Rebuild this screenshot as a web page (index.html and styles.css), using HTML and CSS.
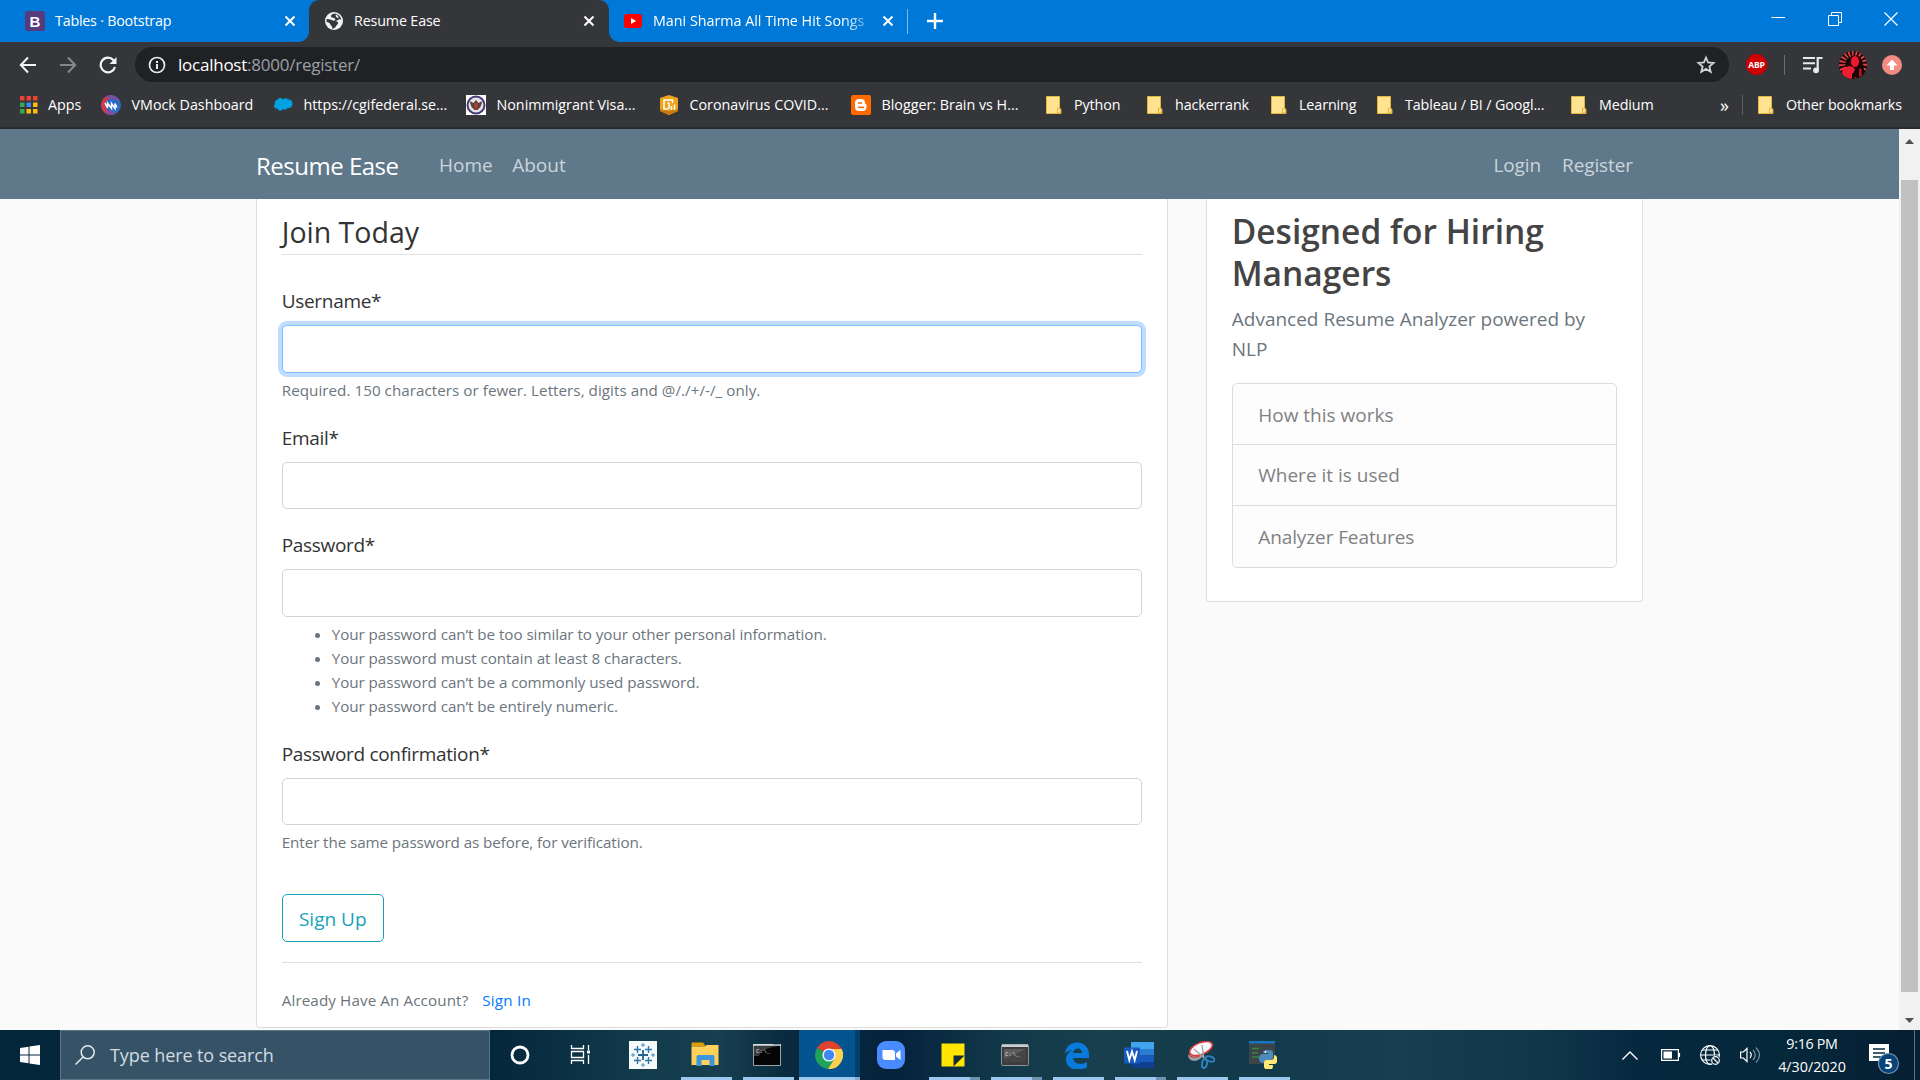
FILE: index.html
```html
<!DOCTYPE html>
<html lang="en">
<head>
<meta charset="utf-8">
<title>Resume Ease</title>
<link rel="stylesheet" href="styles.css">
</head>
<body>
<svg class="defs" aria-hidden="true">
  <symbol id="close" viewBox="0 0 12 12"><path d="M1.5 1.5l9 9M10.5 1.5l-9 9" stroke="#fff" stroke-width="2" fill="none"/></symbol>
  <symbol id="folder" viewBox="0 0 20 20"><path d="M1.500 1.500h13v12l1.500 1v4h-14.500z" fill="#ffe391" stroke="#e0b83e"/><path d="M12.500 18v-4.500h3V18z" fill="#ffe391" stroke="#d6ac33" stroke-width=".8"/></symbol>
</svg>
<header class="browser">
  <div class="tabs">
    <div class="tab tab-first">
      <svg class="fav" viewBox="0 0 20 20"><rect width="20" height="20" rx="3" fill="#553b7e"/><text x="10" y="15.500" text-anchor="middle" class="b-letter">B</text></svg>
      <span class="tab-title t-a">Tables · Bootstrap</span>
      <svg class="x"><use href="#close"/></svg>
    </div>
    <div class="tab tab-active">
      <svg class="fav globe" viewBox="0 0 18 18"><circle cx="9" cy="9" r="9" fill="#f1f3f4"/><path d="M9.500 1.500C7 2 5.500 3.200 6 5c1.300 1 3.800.5 4.300 2.300.2 1.200-1.300 1.700-2.600 1.300C6 8 3.500 6.800 1.800 7.200 1.500 8 1.300 9.300 1.600 10c1.900.3 3.200.8 3.800 2.400.3 1.100 1.500 1.500 1.800 2.600v1.700c1.500.2 3.600-1.300 4.200-3.200.3-1.100 1.700-1.300 1.700-2.600 0-1.600-2-1.800-3.300-2.200 1.600.4 2.600 0 3.600-1 1-.6 2-.5 3 0C15.800 4.500 13 2 9.500 1.500z" fill="#35363a"/><path d="M11.500 2.800c-.3 1.200.3 2.200 2 2.700" fill="none" stroke="#f1f3f4" stroke-width="1.600"/></svg>
      <span class="tab-title t-b">Resume Ease</span>
      <svg class="x"><use href="#close"/></svg>
    </div>
    <div class="tab tab-last">
      <svg class="fav yt" viewBox="0 0 18 14"><rect width="18" height="14" rx="3" fill="#f00"/><path d="M7 4l5.200 3L7 10z" fill="#fff"/></svg>
      <span class="tab-title t-c">Mani Sharma All Time Hit Songs</span>
      <svg class="x"><use href="#close"/></svg>
    </div>
    <svg class="plus" viewBox="0 0 16 16"><path d="M8 0v16M0 8h16" stroke="#fff" stroke-width="2.400"/></svg>
    <div class="win">
      <svg viewBox="0 0 14 14"><path d="M.5 5.500H14" stroke="#fff"/></svg>
      <svg viewBox="0 0 14 14"><path d="M.5 3.500h10v10H.5zM3.500 3V.5h10v10H11" stroke="#fff" fill="none"/></svg>
      <svg viewBox="0 0 14 14"><path d="M.5.5l13 13M13.500.5l-13 13" stroke="#fff" stroke-width="1.200"/></svg>
    </div>
  </div>
  <div class="toolbar">
    <svg class="nav-ic" viewBox="0 0 18 18"><path d="M17 9H2M9 1.500L1.800 9 9 16.500" fill="none" stroke="#f1f3f4" stroke-width="2"/></svg>
    <svg class="nav-ic fwd" viewBox="0 0 18 18"><path d="M1 9h15M9 1.500L16.200 9 9 16.500" fill="none" stroke="#85878a" stroke-width="2"/></svg>
    <svg class="nav-ic" viewBox="0 0 18 18"><path d="M14.500 4.200A7.300 7.300 0 1 0 16 11" fill="none" stroke="#f1f3f4" stroke-width="2.200"/><path d="M17.500 1v7h-7z" fill="#f1f3f4"/></svg>
    <div class="omnibox">
      <svg class="info" viewBox="0 0 18 18"><circle cx="9" cy="9" r="7.500" fill="none" stroke="#e8eaed" stroke-width="1.700"/><path d="M9 8v5M9 5v1.900" stroke="#e8eaed" stroke-width="2"/></svg>
      <span class="url"><b>localhost</b>:8000/register/</span>
      <svg class="star" viewBox="0 0 20 20"><path d="M10 2.500l2.100 5 5.400.5-4.100 3.500 1.300 5.300-4.700-2.900-4.700 2.900 1.300-5.300L2.500 8l5.400-.5z" fill="none" stroke="#d0d2d4" stroke-width="1.800"/></svg>
    </div>
    <svg class="abp" viewBox="0 0 22 22"><path d="M6.500 0h9L22 6.500v9L15.500 22h-9L0 15.500v-9z" fill="#a80818"/><path d="M6.500 1h9L21 6.500v9L15.500 21h-9L1 15.500v-9z" fill="#d00000"/><text x="11" y="14.500" text-anchor="middle" class="abp-t">ABP</text></svg>
    <i class="tsep"></i>
    <svg class="music" viewBox="0 0 20 18"><path d="M0 2h12M0 7.300h12M0 12.600h8" stroke="#e8eaed" stroke-width="2"/><path d="M14.700 14V2H19.500" fill="none" stroke="#e8eaed" stroke-width="2.200"/><circle cx="13" cy="14.300" r="2.900" fill="#e8eaed"/></svg>
    <svg class="avatar" viewBox="0 0 28 28"><clipPath id="av"><circle cx="14" cy="14" r="14"/></clipPath><g clip-path="url(#av)"><path fill="#1c0507" d="M0 0h28v28H0z"/><circle cx="14" cy="13" r="11" fill="none" stroke="#e0424a" stroke-width="7" stroke-dasharray="1.700 1.900"/><path d="M16 4.500c5 0 7 4 8 9 1 4 2 9 0 13H13c2-5-4-6-5-9 1-7 2-13 8-13z" fill="#1c0507"/><ellipse cx="16" cy="10.500" rx="4" ry="5.500" fill="#f0182c"/><path d="M3 19c5-4 8-5 10-3 4 0 3 5 0 7l-1 6H5z" fill="#ee1f35"/><path d="M20 18l2-1 1 8-3 1z" fill="#b01522"/></g></svg>
    <svg class="update" viewBox="0 0 20 20"><circle cx="10" cy="10" r="10" fill="#f28b82"/><path d="M10 4.500l5.500 6H12V15H8v-4.500H4.500z" fill="#fff"/></svg>
  </div>
  <nav class="bookmarks">
    <a class="grid-ic"><svg viewBox="0 0 20 20"><path d="M0 1h4.500v4.500H0zM6.500 1H11v4.500H6.500zM13 1h4.500v4.500H13z" fill="#ea4335"/><path d="M0 7.500h4.500V12H0zM0 14h4.500v4.500H0z" fill="#34a853"/><path d="M6.500 7.500H11V12H6.500z" fill="#4285f4"/><path d="M13 7.500h4.500V12H13zM6.500 14H11v4.500H6.500zM13 14h4.500v4.500H13z" fill="#fbbc05"/></svg><span>Apps</span></a>
    <a><svg viewBox="0 0 20 20"><circle cx="10" cy="10" r="10" fill="#2a6bc4"/><path d="M10 0a10 10 0 0 0-3 19.500C6 14 3 11 5 7s7-3 5-7z" fill="#d9364a"/><path d="M5 1.500c5-3 12 0 14 5-4-2-9-2-14-5zM6 14c3 2 7 2 9 4.500-3 2-6 2-9 1z" fill="#7a4fa0"/><path d="M4 8l2.500 5V8l4 5.500V8.500l3.500 5v-5l2 4" fill="none" stroke="#fff" stroke-width="1.500"/></svg><span>VMock Dashboard</span></a>
    <a><svg viewBox="0 0 20 20"><path d="M4 5c2-3 5-2 6-.5 1.500-2 4-1.500 5 0 3-.5 5 2 4.500 5-.5 3-3 4-5 3.500-1 2-3.500 2-4.500 1-1.500 2.500-5 2-5.500-.5C1 14 0 11 2 9 1 8 2 5.500 4 5z" fill="#00a1e0"/></svg><span>https://cgifederal.se...</span></a>
    <a><svg viewBox="0 0 20 20"><path fill="#fff" d="M0 0h20v20H0z"/><circle cx="10" cy="10" r="8.500" fill="#e8e2ea" stroke="#443c78" stroke-width="2"/><path d="M3.500 6l4 2 2.500-3 2.500 3 4-2-2 6-3 3h-3l-3-3z" fill="#5b4432"/><path d="M8.500 8h3v5l-1.500 1-1.500-1z" fill="#b53a48"/></svg><span>Nonimmigrant Visa...</span></a>
    <a><svg viewBox="0 0 20 20"><path d="M10 0l9 3v13l-9 4-9-4V3z" fill="#eda41a"/><path d="M1 14l9 2 9-2v2l-9 4-9-4z" fill="#c97a0e"/><path d="M13.500 8V5H5v9h4M10 8v6M10 8H8.500M12.500 15v-4M15.500 15V9.500" fill="none" stroke="#fff" stroke-width="1.500"/></svg><span>Coronavirus COVID...</span></a>
    <a><svg viewBox="0 0 20 20"><rect width="20" height="20" rx="2" fill="#ff6a00"/><path d="M8 4h2.500C13 4 14 5.500 14 8c0 1 1.500.5 1.500 2v2c0 2.500-1.500 4-4 4H8c-2.500 0-4-1.500-4-4V8c0-2.500 1.500-4 4-4z" fill="#fff"/><path d="M7.500 8h3M7.500 12.200h5" stroke="#ff6a00" stroke-width="1.600" stroke-linecap="round"/></svg><span>Blogger: Brain vs H...</span></a>
    <a class="dir"><svg><use href="#folder"/></svg><span>Python</span></a>
    <a class="dir"><svg><use href="#folder"/></svg><span>hackerrank</span></a>
    <a class="dir"><svg><use href="#folder"/></svg><span>Learning</span></a>
    <a class="dir"><svg><use href="#folder"/></svg><span>Tableau / BI / Googl...</span></a>
    <a class="dir"><svg><use href="#folder"/></svg><span>Medium</span></a>
    <a class="more">»</a>
    <a class="dir other"><svg><use href="#folder"/></svg><span>Other bookmarks</span></a>
  </nav>
</header>

<div class="viewport">
  <div class="page">
    <nav class="navbar">
      <a class="brand">Resume Ease</a>
      <a class="n1">Home</a>
      <a class="n2">About</a>
      <a class="n3">Login</a>
      <a class="n4">Register</a>
    </nav>
    <main class="container">
      <section class="card form-card">
        <h1>Join Today</h1>
        <div class="group"><label>Username*</label><div class="input focus"></div><small class="hint-a">Required. 150 characters or fewer. Letters, digits and @/./+/-/_ only.</small></div>
        <div class="group"><label>Email*</label><div class="input"></div></div>
        <div class="group"><label>Password*</label><div class="input"></div>
          <ul><li>Your password can’t be too similar to your other personal information.</li><li>Your password must contain at least 8 characters.</li><li>Your password can’t be a commonly used password.</li><li>Your password can’t be entirely numeric.</li></ul></div>
        <div class="group"><label>Password confirmation*</label><div class="input"></div><small class="hint-b">Enter the same password as before, for verification.</small></div>
        <button class="btn">Sign Up</button>
        <div class="signin"><span>Already Have An Account?</span><a>Sign In</a></div>
      </section>
      <aside class="card side-card">
        <h2>Designed for Hiring<br>Managers</h2>
        <p>Advanced Resume Analyzer powered by<br>NLP</p>
        <ul class="list"><li>How this works</li><li>Where it is used</li><li>Analyzer Features</li></ul>
      </aside>
    </main>
  </div>
  <div class="scrollbar">
    <svg viewBox="0 0 9 5"><path d="M0 5h9L4.500 0z" fill="#505050"/></svg>
    <div class="thumb"></div>
    <svg viewBox="0 0 9 5"><path d="M0 0h9L4.500 5z" fill="#505050"/></svg>
  </div>
</div>

<footer class="taskbar">
  <div class="start"><svg viewBox="0 0 20 20"><path d="M0 3l8.500-1.300v7.800H0zM9.500 1.500L20 0v9.500H9.500zM0 10.500h8.500v7.800L0 17zM9.500 10.500H20V20L9.500 18.500z" fill="#fff"/></svg></div>
  <div class="search"><svg viewBox="0 0 20 20"><circle cx="12.700" cy="7.300" r="6.500" fill="none" stroke="#e6ebef" stroke-width="1.500"/><path d="M8 12L.5 19.500" stroke="#e6ebef" stroke-width="1.500"/></svg><span>Type here to search</span></div>
  <div class="apps">
    <div class="app"><svg viewBox="0 0 28 28"><circle cx="14" cy="14" r="8" fill="none" stroke="#fff" stroke-width="2.800"/></svg></div>
    <div class="app"><svg viewBox="0 0 28 28"><path d="M4.500 4v3.500h12V4M4.500 23v-3.500h12V23M4.500 10.500h12v6h-12zM21.500 4v5M21.500 14v9" fill="none" stroke="#fff" stroke-width="1.300"/><path d="M20 9.500h3v3h-3z" fill="#fff"/></svg></div>
    <div class="app"><svg viewBox="0 0 28 28"><path fill="#f6f9fa" d="M0 0h28v28H0z"/><path d="M14 9v10M9 14h10" stroke="#1f6391" stroke-width="1.800"/><path d="M8.500 5v7M5 8.500h7M19.500 5v7M16 8.500h7M8.500 16v7M5 19.500h7M19.500 16v7M16 19.500h7" stroke="#2b78a8" stroke-width="1.400"/><path d="M14 2v4M12 4h4M14 22v4M12 24h4M4 12v4M2 14h4M24 12v4M22 14h4" stroke="#4a90ba" stroke-width="1"/></svg></div>
    <div class="app run"><svg viewBox="0 0 28 28"><path d="M1 2h11l2 3H1z" fill="#e09b00" stroke="#e09b00"/><path d="M.5 5.500H14l1.500-1.500h12V24H.5z" fill="#ffd15a"/><path d="M5.500 25V15.500q0-1.500 1.500-1.500h15q1.500 0 1.500 1.500V25h-5v-6h-8v6z" fill="#3d96dd"/></svg></div>
    <div class="app run"><svg viewBox="0 0 28 28"><path fill="#050505" stroke="#9aa0a4" d="M.5 3.500h27v21H.5z"/><path d="M1 5h26C16 6 8 9 6 15H1z" fill="#3a3d40"/><path fill="#d9dee1" d="M0 3h28v1.800H0z"/><path fill="#8ba0ae" d="M20 3h7v1.300h-7z"/><text x="3" y="11.500" class="cmd">C:\_</text></svg></div>
    <div class="app run active stack"><svg viewBox="0 0 28 28"><path d="M14 14L1.900 7A14 14 0 0 1 26.100 7z" fill="#e0412f"/><path d="M14 14L1.900 7A14 14 0 0 0 14 28l6-10.500z" fill="#1fa25a"/><path d="M26.100 7A14 14 0 0 1 13 28l7-11V7z" fill="#fdd04f"/><path d="M14 7h12.100l1 3H14z" fill="#e0412f"/><path d="M17 8h9.500q2 5 1 9l-7 3z" fill="#fdd04f"/><circle cx="14" cy="14" r="6.600" fill="#f4f6fa"/><circle cx="14" cy="14" r="5.200" fill="#4285f4"/></svg></div>
    <div class="app"><svg viewBox="0 0 28 28"><rect width="28" height="28" rx="9" fill="#4a8cff"/><path d="M5.500 9H15q3 0 3 3v7H8.500q-3 0-3-3z" fill="#fff"/><path d="M19 12.500L23.500 9v10L19 15.500z" fill="#fff"/></svg></div>
    <div class="app run stack"><svg viewBox="0 0 28 28"><path fill="#ffe500" d="M2.500 2.500h23v23h-23z"/><path d="M14.500 25.500v-11h11z" fill="#1b2b33"/></svg></div>
    <div class="app run stack"><svg viewBox="0 0 28 28"><rect x=".5" y="3.500" width="27" height="21" rx="1" fill="#3c3c3c" stroke="#8e9498"/><path fill="#c8cdd0" d="M1 3.500h26V6H1z"/><path d="M3 8h22v13H3z" fill="#454545"/><path d="M3 8h22L3 18z" fill="#5c5c5c"/><text x="4" y="14.500" class="cmd">C:\_</text></svg></div>
    <div class="app run"><svg viewBox="0 0 28 28"><path d="M2 13C3 5 8 1.500 14 1.500c8 0 12 6 12 12V17H10c.5 6 8 7.500 14 4v5.500C14 31 3 28 3 18.500 3 14 6 10.500 9.500 9 5.500 9.500 3.500 11 2 13zm8-1h9c0-6-8-6-9 0z" fill="#0a7bdc"/></svg></div>
    <div class="app run stack"><svg class="wide" viewBox="0 0 30 28"><path fill="#41a5ee" d="M7 1h23v7H7z"/><path fill="#2b7cd3" d="M7 8h23v6.500H7z"/><path fill="#185abd" d="M7 14.500h23V21H7z"/><path fill="#103f91" d="M7 21h23v6H7z"/><rect y="6.500" width="16" height="16" rx="1" fill="#185abd"/><path d="M3 10l2.300 9L8 10.500l2.700 8.500L13 10" fill="none" stroke="#fff" stroke-width="1.900"/></svg></div>
    <div class="app run"><svg viewBox="0 0 28 28"><path d="M1 14c0 5 6 8 12 4l4-4-8-3z" fill="#9aa0a8"/><path d="M2 14c2 3 8 3 12 0" fill="none" stroke="#d83a3a" stroke-width="1.200"/><ellipse cx="14" cy="7.500" rx="12" ry="5.800" transform="rotate(-22 14 7.500)" fill="#f8f8f8" stroke="#d83a3a" stroke-width="1.600"/><path d="M7 8l10 9M15 4l2 13" stroke="#a0a5aa" stroke-width="1.300"/><ellipse cx="23" cy="18" rx="4.500" ry="2.500" transform="rotate(15 23 18)" fill="none" stroke="#2e86c8" stroke-width="1.800"/><ellipse cx="17.500" cy="22.500" rx="2.500" ry="4.500" transform="rotate(10 17.500 22.500)" fill="none" stroke="#2e86c8" stroke-width="1.800"/></svg></div>
    <div class="app run"><svg viewBox="0 0 28 28"><path fill="#3b4548" d="M0 0h26v23H0z"/><path fill="#1675bd" d="M0 0h26v2.500H0z"/><path d="M3 7.500h7M3 12h6M3 16h7" stroke="#38863f" stroke-width="1.600"/><g transform="translate(1 0)"><path d="M18 9c4 0 5 1 5 3v4c0 2-1 3-3 3h-4c-2 0-2 1-2 3h-2c-4 0-4-9 0-9h6v-1h-5c0-3 2-3 5-3z" fill="#4b8bbe"/><path d="M24 14c4.500 0 4.500 9 0 9h-5v1h4c0 4-1 4.500-4 4.500s-5-.5-5-3v-4c0-2 1-2.500 3-2.500h4c2 0 3-1 3-3z" fill="#ffe873"/><circle cx="15.500" cy="11" r=".9" fill="#fff"/></g></svg></div>
  </div>
  <div class="tray">
    <svg class="chev" viewBox="0 0 16 9"><path d="M.5 8.500L8 1l7.500 7.500" fill="none" stroke="#fff" stroke-width="1.400"/></svg>
    <svg class="batt" viewBox="0 0 20 12"><path d="M.6.600h16.800v10.800H.6zM18.500 4v4" fill="none" stroke="#fff" stroke-width="1.200"/><path d="M2.500 2.500H11v7H2.500z" fill="#fff"/></svg>
    <svg class="net" viewBox="0 0 20 20"><g fill="none" stroke="#fff" stroke-width="1.200"><circle cx="10" cy="10" r="9.400"/><ellipse cx="10" cy="10" rx="4.500" ry="9.400"/><path d="M.6 10h18.800M2.500 5h15M2.500 15H11"/></g><circle cx="15.500" cy="15.500" r="5" fill="#05283b"/><circle cx="15.500" cy="15.500" r="3.800" fill="none" stroke="#fff" stroke-width="1.200"/><path d="M13 13l5 5" stroke="#fff" stroke-width="1.200"/></svg>
    <svg class="vol" viewBox="0 0 21 18"><g fill="none" stroke-width="1.200"><path d="M.6 6v6h2.800l3.600 3.500V2.500L3.400 6z" stroke="#fff"/><path d="M10 6q2.500 3 0 6" stroke="#fff"/><path d="M13 4q4.500 5 0 10M16 1.500q7 7.500 0 15" stroke="#7d929f"/></g></svg>
    <div class="clock"><span class="time">9:16 PM</span><span>4/30/2020</span></div>
    <svg class="note" viewBox="0 0 32 32"><path d="M0 0h20v17h-7l-3 4v-4H0z" fill="#fff"/><path d="M4 5h12M4 9h12M4 13h12" stroke="#05283b" stroke-width="1.300"/><circle cx="19.500" cy="19.500" r="10" fill="#08437a" stroke="#6f93ae" stroke-width="1.200"/><text x="19.500" y="24.700" text-anchor="middle" class="five">5</text></svg>
    <i></i>
  </div>
</footer>
</body>
</html>
```
FILE: styles.css
```css
* { box-sizing: border-box; }
body {
  margin: 0;
  width: 1920px;
  height: 1080px;
  overflow: hidden;
  display: flex;
  flex-direction: column;
  font-family: "Open Sans", "Noto Sans", sans-serif;
  font-size: 19px;
  background: #fafafa;
}
svg { display: block; flex: none; }
a { text-decoration: none; }
ul, h1, h2, p { margin: 0; padding: 0; }
.defs { position: absolute; width: 0; height: 0; }

/* Browser window */
.browser { height: 129px; background: #35363a; border-bottom: 2px solid #292a2d; font-size: 14.3px; color: #fff; }
.tabs { display: flex; height: 42px; background: #0078d7; align-items: center; }
.tab { display: flex; align-items: center; height: 42px; position: relative; white-space: nowrap; }
.tab-title { padding-bottom: 1px; }
.tab-first { width: 309px; padding: 0 13px 0 25px; }
.tab-active { width: 300px; padding: 0 14px 0 16px; background: #35363a; border-radius: 10px 10px 0 0; }
.tab-active::before, .tab-active::after { content: ""; position: absolute; bottom: 0; width: 10px; height: 10px; }
.tab-active::before { left: -10px; background: radial-gradient(circle at 0 0, #0078d7 9.500px, #35363a 10px); }
.tab-active::after { right: -10px; background: radial-gradient(circle at 100% 0, #0078d7 9.500px, #35363a 10px); }
.tab-last { width: 299px; padding: 0 14px 0 15px; }
.tab-last::after { content: ""; position: absolute; right: 0; top: 9px; width: 1px; height: 25px; background: #7fbbea; }
.fav { width: 20px; height: 20px; margin-right: 10px; }
.fav.globe { width: 18px; height: 18px; margin-right: 11px; }
.fav.yt { width: 18px; height: 14px; margin-right: 11px; }
.b-letter { font: bold 15px "Liberation Sans", sans-serif; fill: #fff; }
.x { width: 12px; height: 12px; margin-left: auto; }
.t-a { letter-spacing: -0.22px; }
.t-b { letter-spacing: -0.15px; }
.t-c { -webkit-mask-image: linear-gradient(90deg, #000 190px, rgba(0, 0, 0, .35) 214px); mask-image: linear-gradient(90deg, #000 190px, rgba(0, 0, 0, .35) 214px); }
.plus { width: 16px; height: 16px; margin-left: 19px; }
.win { margin-left: auto; display: flex; gap: 42.500px; padding: 0 22px 5px 0; }
.win svg { width: 14px; height: 14px; }

.toolbar { display: flex; align-items: center; height: 45px; padding: 0 18px 0 19px; }
.nav-ic { width: 18px; height: 18px; margin-right: 22px; }
.nav-ic:nth-child(3) { margin-right: 18px; }
.omnibox { width: 1594px; height: 35px; border-radius: 18px; background: #202124; display: flex; align-items: center; padding: 0 13px; font-size: 17px; letter-spacing: -0.24px; color: #9aa0a6; }
.omnibox b { font-weight: 400; color: #fff; }
.info { width: 18px; height: 18px; margin-right: 12px; }
.star { width: 20px; height: 20px; margin-left: auto; }
.abp { width: 21px; height: 21px; margin-left: 17px; }
.abp-t { font: bold 9px "Open Sans", sans-serif; fill: #fff; letter-spacing: -0.2px; }
.tsep { width: 1px; height: 20px; background: #6b6d70; margin-left: 17px; }
.music { width: 20px; height: 18px; margin-left: 18px; }
.avatar { width: 28px; height: 28px; margin-left: 16px; }
.update { width: 20px; height: 20px; margin-left: auto; }

.bookmarks { display: grid; grid-template-columns: 81px 172px 193px 193px 192px 194px 101px 124px 106px 194px 150px 22px 160px; padding: 0 0 1px 20px; height: 36px; align-items: center; white-space: nowrap; }
.bookmarks a { display: flex; align-items: center; gap: 10.500px; }
.bookmarks .grid-ic { gap: 8px; }
.bookmarks .dir { gap: 9px; letter-spacing: -0.1px; }
.bookmarks span { padding-bottom: 1px; }
.bookmarks svg { width: 20px; height: 20px; }
.bookmarks .more { font-size: 18px; height: 24px; line-height: 20px; }
.bookmarks .other { padding-left: 14px; border-left: 1px solid #5b5c60; }

/* Web page */
.viewport { display: flex; height: 901px; }
.page { width: 1899px; background: #fafafa; }
.navbar { display: flex; align-items: center; height: 70px; padding: 2px 266px 0 256px; background: #5f788a; color: #cbd5db; }
.brand { color: #fff; font-size: 24px; letter-spacing: -0.5px; margin-right: 40.500px; }
.n1 { margin-right: 19.500px; }
.n3 { margin-left: auto; margin-right: 21px; letter-spacing: -0.1px; }
.n4 { letter-spacing: -0.1px; }
.container { display: flex; width: 1387.5px; margin-left: 255.75px; gap: 37.5px; align-items: flex-start; }
.card { background: #fff; border: 1px solid #ddd; border-top: 0; border-radius: 0 0 4px 4px; }
.form-card { width: 912.5px; padding: 9.75px 25px 12.5px; color: #333; }
.side-card { width: 437.5px; padding: 11px 25px 33px; }
h1 { font-size: 28.5px; line-height: 43px; padding-top: 2px; font-weight: 400; border-bottom: 1px solid #dee2e6; margin-bottom: 30.25px; }
.group { margin-bottom: 20px; }
label { display: block; line-height: 28px; padding-top: 2px; margin-bottom: 10px; letter-spacing: -0.32px; }
.input { height: 47.5px; border: 1px solid #ced4da; border-radius: 5px; background: #fff; }
.input.focus { border-color: #80bdff; box-shadow: 0 0 0 4px #bfdeff; }
small, .group ul { display: block; margin-top: 5px; font-size: 15.2px; line-height: 24px; color: #6c757d; }
.hint-a { letter-spacing: 0.04px; }
.hint-b { letter-spacing: -0.08px; }
.group ul { padding-left: 50px; letter-spacing: -0.05px; }
.btn { display: block; margin-top: 40px; width: 102px; height: 47.5px; border: 1px solid #17a2b8; border-radius: 5px; background: #fff; color: #17a2b8; font: inherit; padding: 2px 0 0; }
.signin { margin-top: 20px; border-top: 1px solid #dee2e6; padding-top: 22px; line-height: 30px; font-size: 15.2px; letter-spacing: 0.11px; color: #6c757d; }
.signin a { color: #007bff; letter-spacing: 0.2px; margin-left: 14px; }
h2 { font-size: 33.5px; line-height: 42px; font-weight: 600; color: #444; margin-bottom: 10px; }
.side-card p { line-height: 30px; color: #6c757d; margin-bottom: 19px; }
.list { list-style: none; border: 1px solid #dcdcdd; border-radius: 5px; background: #fdfdfe; color: #818182; }
.list li { height: 61px; line-height: 30px; padding: 15px 25.5px; }
.list li:first-child { height: 60px; padding-top: 16px; }
.list li:last-child { height: 62px; padding-top: 16px; letter-spacing: -0.1px; }
.list li + li { border-top: 1px solid #dcdcdd; }
.scrollbar { width: 21px; background: #f1f1f1; display: flex; flex-direction: column; align-items: center; padding: 10px 0 7px; }
.scrollbar svg { width: 9px; height: 5px; }
.thumb { width: 17px; height: 812px; margin-top: 36px; background: #c1c1c1; }
.scrollbar svg:last-child { margin-top: auto; }

/* Taskbar */
.taskbar { height: 50px; display: flex; background: linear-gradient(90deg, #04263b 0, #04263b 490px, #123b4c 640px, #173f4f 720px, #08293e 790px, #05233c 900px, #123a4a 1010px, #173f4e 1100px, #123a4a 1240px, #173f50 1400px, #0f3549 1560px, #05283e 1640px, #05283b 1780px, #061f33 1900px); }
.start { width: 60px; display: flex; align-items: center; justify-content: center; }
.start svg { width: 20px; height: 20px; }
.search { width: 430px; border: 1px solid #5b7587; background: #355267; display: flex; align-items: center; color: #d3dbe1; font-size: 18px; letter-spacing: -0.1px; }
.search svg { width: 20px; height: 20px; margin: 0 15px 0 14px; }
.apps { display: flex; margin-left: -1px; }
.app { width: 62px; display: flex; justify-content: center; align-items: center; position: relative; }
.app:nth-child(n+2) { left: -1px; }
.app svg { width: 28px; height: 28px; }
.app svg.wide { width: 30px; }
.app.run::after { content: ""; position: absolute; left: 7px; bottom: 0; width: 51px; height: 3px; background: #9cc8f0; }
.app.stack::after { background: linear-gradient(90deg, #9cc8f0 41px, #6f93b0 41px); }
.app.active { background: linear-gradient(90deg, transparent 1px, #045490 1px, #045490 57px, #04406e 57px); }
.app.active::after { left: 1px; width: 61px; background: linear-gradient(90deg, #9cc8f0 56px, #7fa9cf 56px); }
.cmd { font: 6px "Liberation Mono", monospace; fill: #ddd; }
.tray { margin-left: auto; display: flex; align-items: center; }
.chev { width: 16px; height: 9px; }
.batt { width: 20px; height: 12px; margin-left: 23px; }
.net { width: 20px; height: 20px; margin-left: 19px; }
.vol { width: 21px; height: 18px; margin-left: 20px; }
.clock { width: 84px; margin-left: 9px; display: flex; flex-direction: column; align-items: center; font-size: 14.3px; line-height: 23px; color: #fff; white-space: nowrap; }
.time { letter-spacing: -0.3px; }
.note { width: 32px; height: 32px; margin: 10px 0 0 15px; }
.five { font: bold 14px "Open Sans", sans-serif; fill: #fff; }
.tray i { width: 1px; height: 50px; background: #5c7383; margin: 0 5px 0 13px; }
```
